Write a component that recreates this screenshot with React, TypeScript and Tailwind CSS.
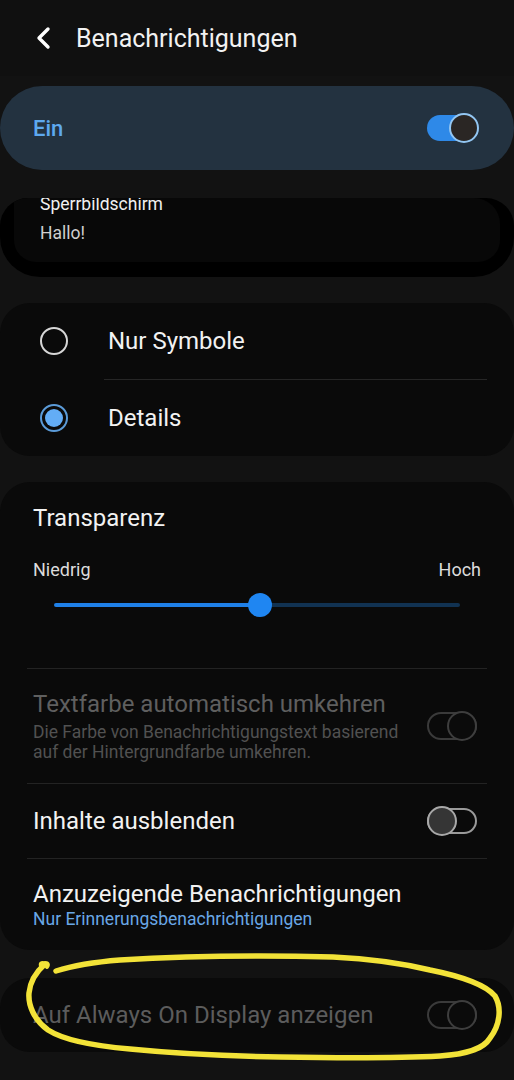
import React from "react";

function ToggleOn() {
  return (
    <div className="relative w-[52px] h-[30px] flex items-center">
      <div className="absolute left-0 top-[2px] w-[44px] h-[26px] rounded-full bg-[#2e89e8]" />
      <div className="absolute right-0 top-0 w-[30px] h-[30px] rounded-full bg-[#2a2624] border-2 border-[#93c6f2]" />
    </div>
  );
}

function ToggleDisabled() {
  return (
    <div className="relative w-[52px] h-[30px]">
      <div className="absolute left-0 top-[1px] w-[50px] h-[28px] rounded-full border-2 border-[#3a3a3a]" />
      <div className="absolute right-[2px] top-0 w-[30px] h-[30px] rounded-full border-2 border-[#3e3e3e] bg-[#0b0b0b]" />
    </div>
  );
}

function ToggleOff() {
  return (
    <div className="relative w-[52px] h-[30px]">
      <div className="absolute left-0 top-[2px] w-[50px] h-[26px] rounded-full border-2 border-[#9a9a9a]" />
      <div className="absolute left-0 top-0 w-[30px] h-[30px] rounded-full border-2 border-[#a8a8a8] bg-[#353535]" />
    </div>
  );
}

export default function App() {
  return (
    <div
      className="relative w-[514px] h-[1080px] overflow-hidden bg-[#121212] text-white"
      style={{ fontFamily: "Roboto, 'Noto Sans', sans-serif" }}
    >
      {/* Header */}
      <div className="h-[76px] flex items-center bg-[#101010]">
        <svg className="ml-[34px]" width="18" height="24" viewBox="0 0 18 24" fill="none">
          <path d="M14 3 L5 12 L14 21" stroke="#ffffff" strokeWidth="3.4" strokeLinecap="round" strokeLinejoin="round" />
        </svg>
        <span className="ml-[24px] text-[25px] leading-none text-[#f2f2f2]">Benachrichtigungen</span>
      </div>

      {/* Ein */}
      <div className="mt-[10px] h-[84px] rounded-[42px] bg-[#233240] flex items-center justify-between pl-[33px] pr-[35px]">
        <span className="text-[22px] font-medium text-[#5ea9ef]">Ein</span>
        <ToggleOn />
      </div>

      {/* Preview */}
      <div className="mt-[28px] h-[79px] rounded-b-[40px] rounded-t-[28px] bg-[#000000] px-[14px] overflow-hidden">
        <div className="h-[64px] rounded-b-[22px] rounded-tr-[26px] bg-[#080808] pl-[26px] overflow-hidden">
          <div className="-mt-[4px] text-[17.5px] leading-[20px] text-[#f0f0f0]">Sperrbildschirm</div>
          <div className="mt-[9px] text-[17.5px] leading-[20px] text-[#cfcfcf]">Hallo!</div>
        </div>
      </div>

      {/* Radio card */}
      <div className="mt-[26px] h-[153px] rounded-[30px] bg-[#0a0a0a] flex flex-col">
        <div className="h-[76px] flex items-center">
          <div className="ml-[40px] w-[28px] h-[28px] rounded-full border-2 border-[#d6d6d6]" />
          <span className="ml-[40px] text-[24px] text-[#f2f2f2]">Nur Symbole</span>
        </div>
        <div className="ml-[104px] mr-[27px] h-px bg-[#262626]" />
        <div className="h-[76px] flex items-center">
          <div className="ml-[40px] w-[28px] h-[28px] rounded-full border-2 border-[#5b9bd8] flex items-center justify-center">
            <div className="w-[18px] h-[18px] rounded-full bg-[#63adf6]" />
          </div>
          <span className="ml-[40px] text-[24px] text-[#f2f2f2]">Details</span>
        </div>
      </div>

      {/* Transparenz card */}
      <div className="mt-[26px] h-[468px] rounded-[30px] bg-[#0a0a0a] flex flex-col">
        <div className="mt-[22px] px-[33px] h-[28px] flex items-center text-[24px] text-[#f2f2f2]">Transparenz</div>
        <div className="mt-[25px] px-[33px] h-[24px] flex items-center justify-between text-[18px] text-[#dcdcdc]">
          <span>Niedrig</span>
          <span>Hoch</span>
        </div>
        <div className="mt-[12px] mx-[54px] h-[24px] relative flex items-center">
          <div className="h-[4px] w-[206px] rounded-l-full bg-[#1f80e8]" />
          <div className="h-[4px] flex-1 rounded-r-full bg-[#113252]" />
          <div className="absolute left-[194px] top-0 w-[24px] h-[24px] rounded-full bg-[#1f86f2]" />
        </div>
        <div className="mt-[51px] mx-[27px] h-px bg-[#232323]" />

        <div className="h-[114px] pl-[33px] pr-[35px] flex items-center justify-between">
          <div className="flex flex-col">
            <span className="text-[24px] leading-[28px] text-[#5f5f5f]">Textfarbe automatisch umkehren</span>
            <span className="mt-[4px] text-[17.5px] leading-[20px] text-[#515151]">
              Die Farbe von Benachrichtigungstext basierend
              <br />
              auf der Hintergrundfarbe umkehren.
            </span>
          </div>
          <ToggleDisabled />
        </div>
        <div className="mx-[27px] h-px bg-[#232323]" />

        <div className="h-[74px] pl-[33px] pr-[35px] flex items-center justify-between">
          <span className="text-[24px] text-[#f2f2f2]">Inhalte ausblenden</span>
          <ToggleOff />
        </div>
        <div className="mx-[27px] h-px bg-[#232323]" />

        <div className="px-[33px] pt-[21px] flex flex-col">
          <span className="text-[24px] leading-[28px] text-[#f2f2f2]">Anzuzeigende Benachrichtigungen</span>
          <span className="mt-[1px] text-[17.5px] leading-[20px] text-[#69a7e6]">Nur Erinnerungsbenachrichtigungen</span>
        </div>
      </div>

      {/* Always On Display */}
      <div className="mt-[28px] h-[74px] rounded-[30px] bg-[#0a0a0a] pl-[33px] pr-[35px] flex items-center justify-between">
        <span className="text-[24px] text-[#5c5c5c]">Auf Always On Display anzeigen</span>
        <ToggleDisabled />
      </div>

      {/* Yellow hand-drawn annotation */}
      <svg
        className="absolute left-0 top-0 pointer-events-none"
        width="514"
        height="1080"
        viewBox="0 0 514 1080"
        fill="none"
      >
        <path
          d="M56 971 C 75 965, 95 962, 120 960 C 170 957, 250 955, 333 957 C 375 959, 405 964, 430 970 C 460 976, 485 984, 495 996 C 502 1008, 500 1025, 490 1038 C 484 1048, 470 1054, 440 1056 C 400 1058, 340 1058, 280 1057 C 220 1056, 170 1053, 130 1049 C 95 1046, 65 1041, 48 1030 C 34 1020, 28 1005, 29 993 C 30 982, 36 972, 45 964"
          stroke="#f3e338"
          strokeWidth="5.5"
          strokeLinecap="round"
          strokeLinejoin="round"
        />
        <path
          d="M45 964 C 43 962, 40 963, 41 966 M45 964 C 47 962, 49 964, 47 967"
          stroke="#f3e338"
          strokeWidth="4"
          strokeLinecap="round"
        />
      </svg>
    </div>
  );
}
